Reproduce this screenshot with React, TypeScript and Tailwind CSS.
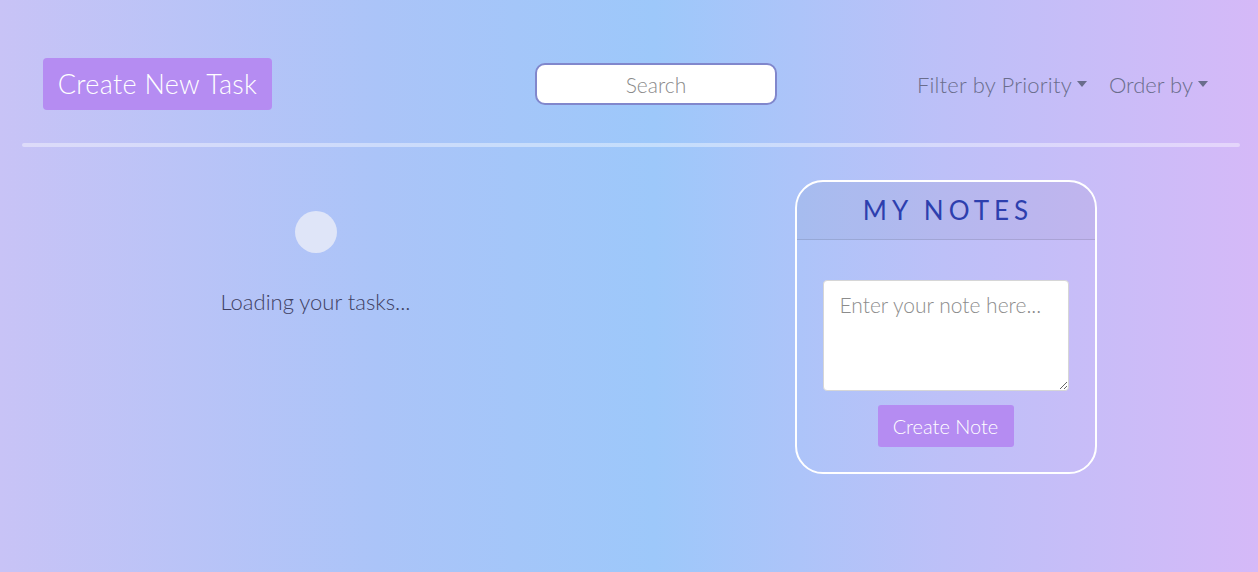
import React from "react";

function Caret() {
  return (
    <svg width="10" height="6" viewBox="0 0 10 6" className="ml-[5px] inline-block">
      <path d="M0 0 L10 0 L5 6 Z" fill="currentColor" />
    </svg>
  );
}

export default function App() {
  return (
    <div
      className="min-h-screen w-full bg-[linear-gradient(to_right,#c8c3f6_0%,#abc4f8_30%,#9dc8fa_52%,#bdc0f8_75%,#d5b9f8_100%)]"
      style={{ fontFamily: "Lato, 'Noto Sans', sans-serif" }}
    >
      <div className="pl-[22px] pr-[18px]">
        <nav className="flex items-center pt-[58px] pb-[33px] pl-[21px] pr-[32px]">
          <button className="h-[52px] w-[229px] rounded-[4px] bg-[#b58cf2] text-[27px] font-light text-white tracking-[0.3px]">
            Create New Task
          </button>
          <input
            placeholder="Search"
            className="ml-[263px] h-[42px] w-[242px] rounded-[10px] border-[2px] border-[#8187cc] bg-white text-center text-[21px] font-light outline-none placeholder:text-[#8a8a8a]"
          />
          <div className="ml-auto flex items-center gap-[22px] text-[22px] font-light text-[#6a6d8c]">
            <span className="flex items-center tracking-[0.2px]">
              Filter by Priority
              <Caret />
            </span>
            <span className="flex items-center">
              Order by
              <Caret />
            </span>
          </div>
        </nav>
        <div className="h-[4px] rounded-full bg-white/40" />
      </div>

      <div className="grid grid-cols-2">
        <div className="flex flex-col items-center pt-[64px] pl-[2px]">
          <div className="h-[42px] w-[42px] rounded-full bg-[#dfe5f8]" />
          <p className="mt-[32px] text-[22px] font-light text-[#3f4163]">Loading your tasks...</p>
        </div>
        <div className="flex justify-center pt-[33px] pl-[4px]">
          <div className="w-[302px] h-[294px] overflow-hidden rounded-[28px] border-2 border-white">
            <div className="flex h-[58px] items-center justify-center border-b border-black/10 bg-black/[0.04]">
              <h2 className="text-[26px] tracking-[5px] text-[#2d3fae] pl-[5px]">MY NOTES</h2>
            </div>
            <div className="flex flex-col items-center pt-[40px]">
              <textarea
                placeholder="Enter your note here..."
                className="h-[111px] w-[246px] resize-y rounded-[4px] border border-[#d6d6d6] bg-white px-[16px] py-[8px] text-[21px] font-light outline-none placeholder:text-[#8c8c8c]"
              />
              <button className="mt-[14px] h-[42px] w-[136px] rounded-[3px] bg-[#b58cf2] text-[20px] font-light text-white">
                Create Note
              </button>
            </div>
          </div>
        </div>
      </div>
    </div>
  );
}
